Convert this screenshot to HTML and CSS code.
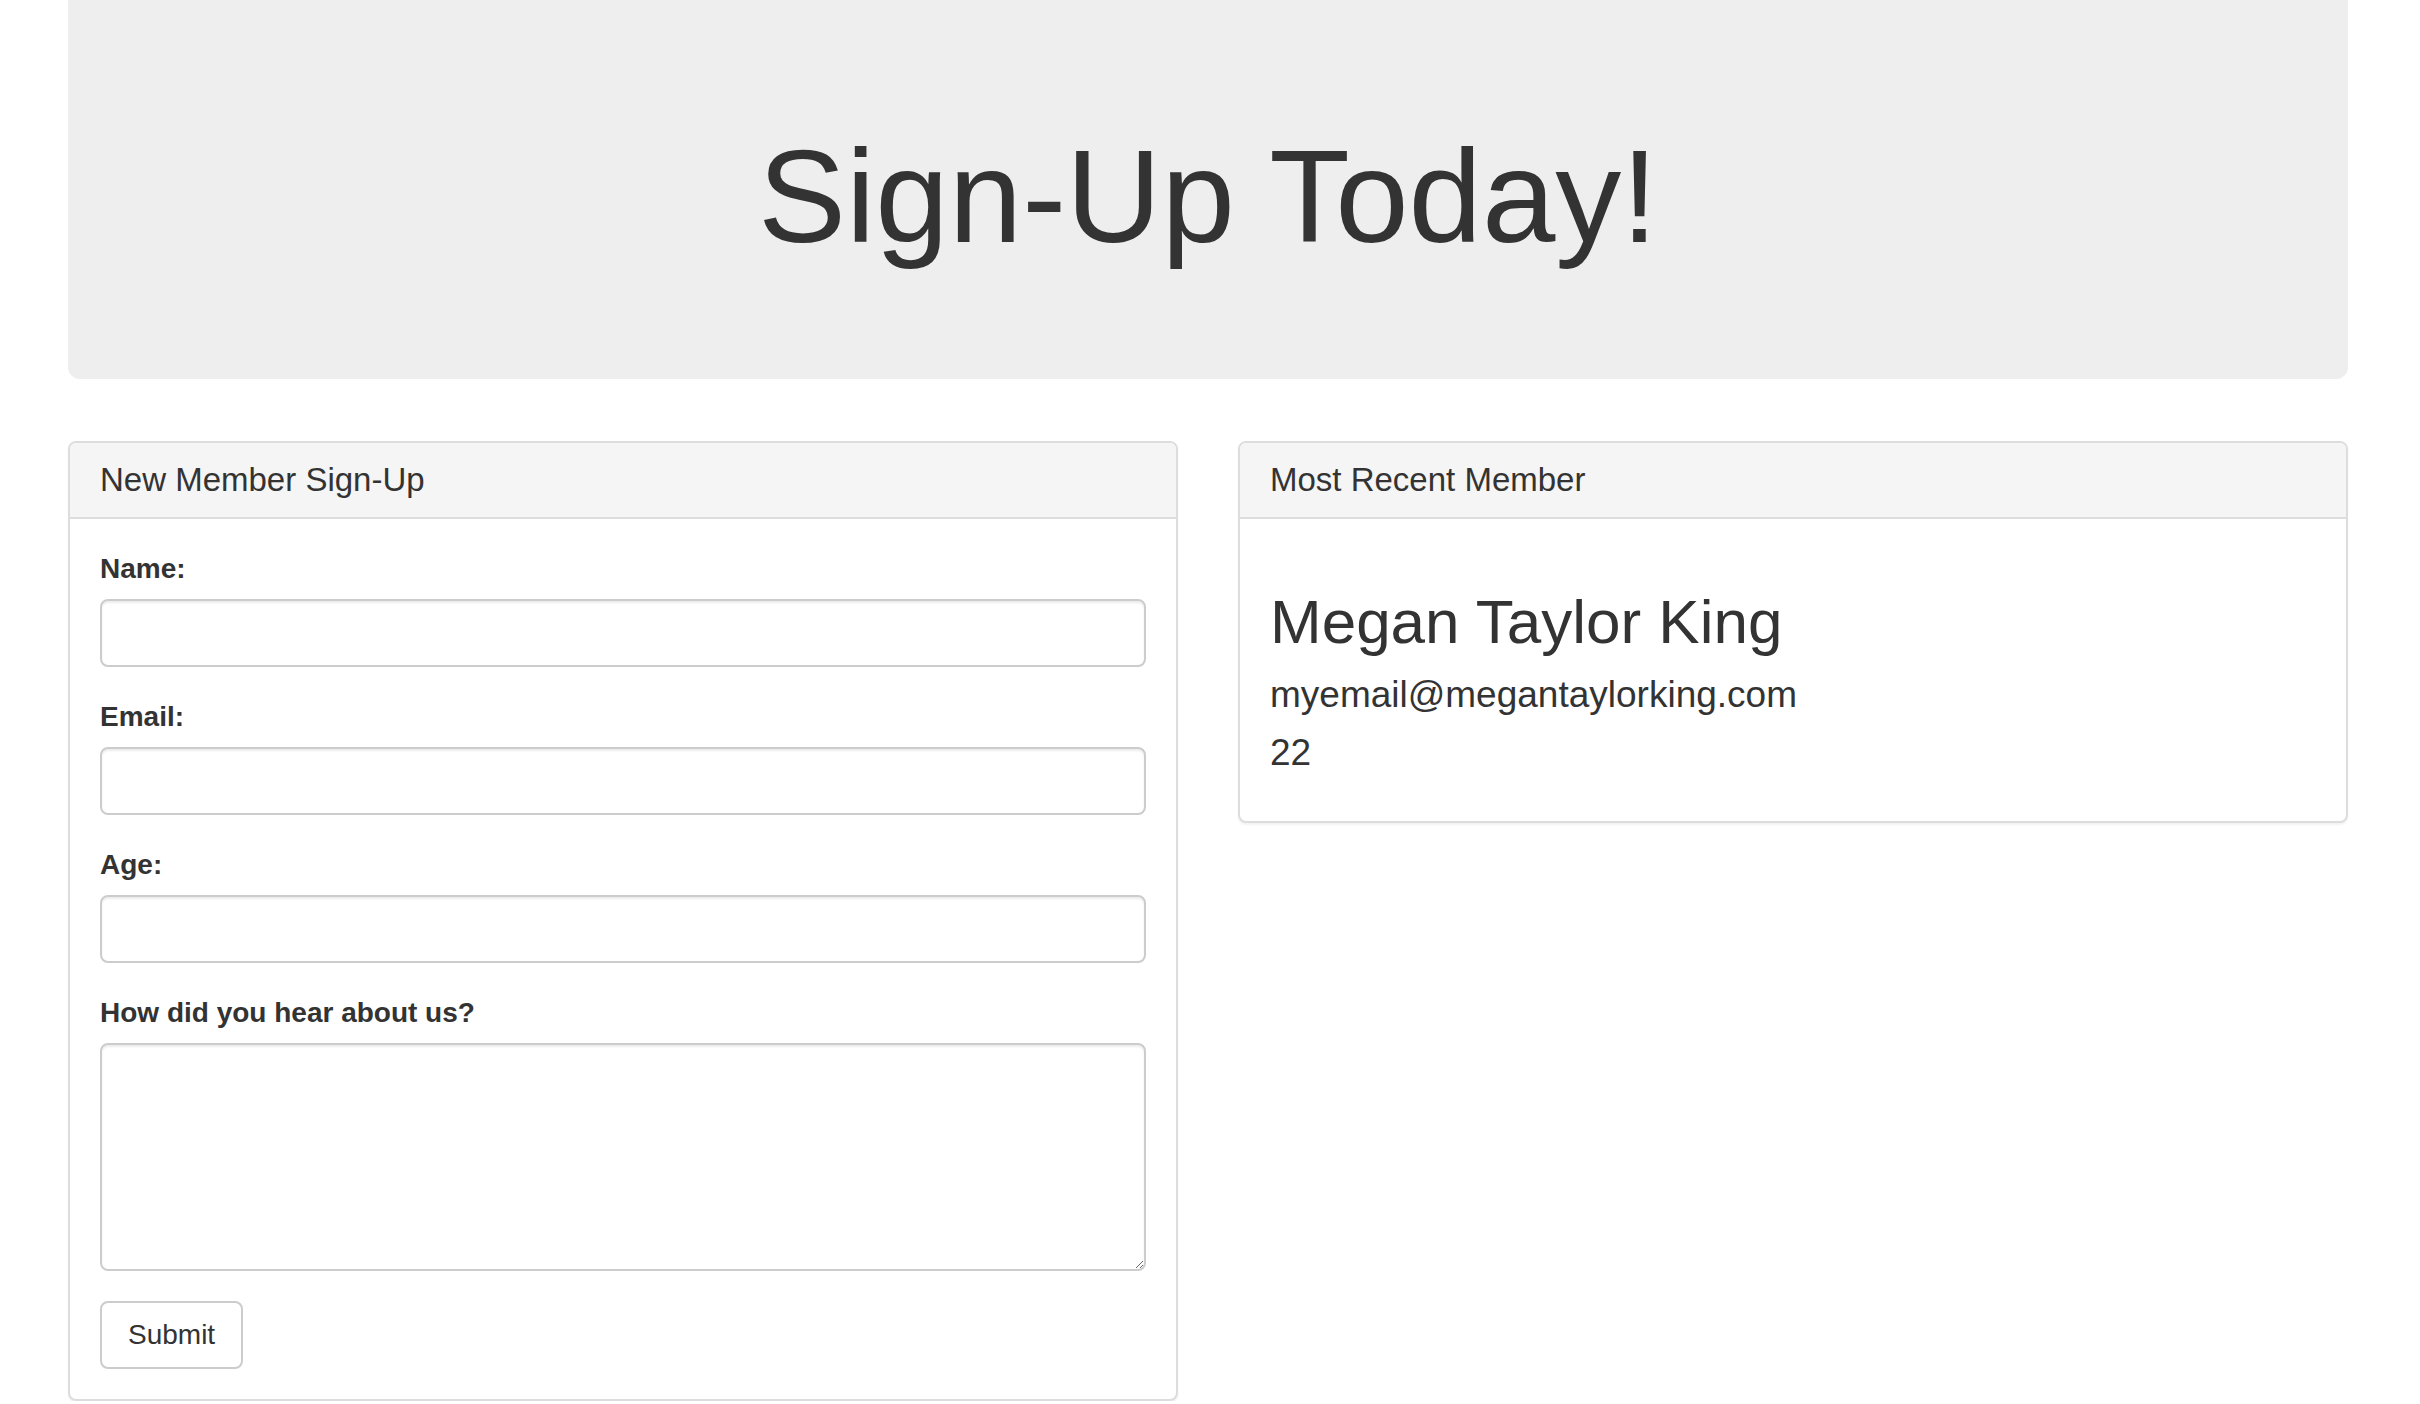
FILE: index.html
```html
<!DOCTYPE html>
<html lang="en">
<head>
<meta charset="utf-8">
<title>Sign-Up Today!</title>
<link rel="stylesheet" href="styles.css">
</head>
<body>
<div class="container">
  <div class="jumbotron">
    <h1 class="jumbo-title">Sign-Up Today!</h1>
  </div>
  <div class="row">
    <div class="panel">
      <div class="panel-heading">New Member Sign-Up</div>
      <div class="panel-body">
        <form class="form">
          <div class="form-group">
            <label class="form-label" for="name">Name:</label>
            <input class="form-control" id="name" type="text">
          </div>
          <div class="form-group">
            <label class="form-label" for="email">Email:</label>
            <input class="form-control" id="email" type="text">
          </div>
          <div class="form-group">
            <label class="form-label" for="age">Age:</label>
            <input class="form-control" id="age" type="text">
          </div>
          <div class="form-group">
            <label class="form-label" for="how">How did you hear about us?</label>
            <textarea class="form-control form-textarea" id="how" rows="5"></textarea>
          </div>
          <button class="btn" type="button">Submit</button>
        </form>
      </div>
    </div>
    <div class="panel panel-top">
      <div class="panel-heading">Most Recent Member</div>
      <div class="panel-body">
        <h2 class="member-name">Megan Taylor King</h2>
        <h4 class="member-info">myemail@megantaylorking.com</h4>
        <h4 class="member-info">22</h4>
      </div>
    </div>
  </div>
</div>
</body>
</html>
```

FILE: styles.css
```css
* {
  box-sizing: border-box;
}

html, body {
  margin: 0;
  padding: 0;
  background: #fff;
}

body {
  font-family: "Liberation Sans", Arial, Helvetica, sans-serif;
  font-size: 28px;
  line-height: 1.42857;
  color: #333;
}

.container {
  width: 2280px;
  margin-left: 68px;
}

.jumbotron {
  background: #eeeeee;
  border-radius: 0 0 12px 12px;
  padding: 84px 120px 90px;
  margin-bottom: 62px;
}

.jumbo-title {
  margin: 40px 0 20px;
  font-size: 132px;
  font-weight: 500;
  line-height: 1.1;
  text-align: center;
  color: #333;
}

.row {
  display: grid;
  grid-template-columns: 1110px 1110px;
  column-gap: 60px;
  align-items: start;
}

.panel {
  background: #fff;
  border: 2px solid #dddddd;
  border-radius: 8px;
  box-shadow: 0 2px 2px rgba(0, 0, 0, 0.05);
}

.panel-heading {
  background: #f5f5f5;
  border-bottom: 2px solid #dddddd;
  border-radius: 6px 6px 0 0;
  padding: 19px 30px;
  font-size: 33px;
  line-height: 36px;
}

.panel-body {
  padding: 30px;
}

.form {
  margin: 0;
}

.form-group {
  margin-bottom: 30px;
}

.form-label {
  display: block;
  font-weight: bold;
  margin-bottom: 10px;
  font-size: 28px;
  line-height: 40px;
}

.form-control {
  display: block;
  width: 100%;
  height: 68px;
  padding: 12px 24px;
  font-family: inherit;
  font-size: 28px;
  color: #555;
  background: #fff;
  border: 2px solid #cccccc;
  border-radius: 8px;
  box-shadow: inset 0 2px 2px rgba(0, 0, 0, 0.075);
  margin: 0;
}

.form-textarea {
  height: 228px;
  resize: vertical;
}

.btn {
  display: inline-block;
  height: 68px;
  padding: 12px 26px;
  font-family: inherit;
  font-size: 28px;
  line-height: 40px;
  color: #333;
  background: #fff;
  border: 2px solid #cccccc;
  border-radius: 8px;
  margin: 0;
}

.member-name {
  margin: 40px 0 20px;
  font-size: 62px;
  font-weight: 500;
  line-height: 66px;
}

.member-info {
  margin: 18px 0;
  font-size: 37px;
  font-weight: 500;
  line-height: 40px;
}
```
